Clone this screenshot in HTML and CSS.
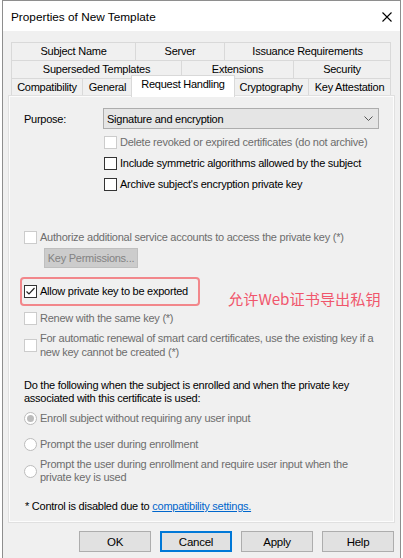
FILE: index.html
```html
<!DOCTYPE html>
<html>
<head>
<meta charset="utf-8">
<link rel="stylesheet" href="styles.css">
</head>
<body>
<div class="window">
  <div class="titlebar">
    <span class="title">Properties of New Template</span>
    <svg class="close" width="10" height="10" viewBox="0 0 10 10"><path d="M0.5 0.5 L9.5 9.5 M9.5 0.5 L0.5 9.5" stroke="#000" stroke-width="1.1" fill="none"/></svg>
  </div>
  <div class="body">
    <div class="tabs">
      <div class="tabrow r1">
        <div class="tab">Subject Name</div>
        <div class="tab">Server</div>
        <div class="tab">Issuance Requirements</div>
      </div>
      <div class="tabrow r2">
        <div class="tab">Superseded Templates</div>
        <div class="tab">Extensions</div>
        <div class="tab">Security</div>
      </div>
      <div class="tabrow r3">
        <div class="tab">Compatibility</div>
        <div class="tab">General</div>
        <div class="tab active">Request Handling</div>
        <div class="tab">Cryptography</div>
        <div class="tab">Key Attestation</div>
      </div>
    </div>
    <div class="panel">
      <div class="purpose-row">
        <span class="label">Purpose:</span>
        <div class="select">
          <span>Signature and encryption</span>
          <svg class="chev" width="9" height="5" viewBox="0 0 9 5"><path d="M0.5 0.5 L4.5 4.5 L8.5 0.5" stroke="#555" stroke-width="1" fill="none"/></svg>
        </div>
      </div>
      <div class="indent-group">
        <div class="cb disabled"><span class="box"></span><span class="txt">Delete revoked or expired certificates (do not archive)</span></div>
        <div class="cb"><span class="box"></span><span class="txt">Include symmetric algorithms allowed by the subject</span></div>
        <div class="cb"><span class="box"></span><span class="txt">Archive subject's encryption private key</span></div>
      </div>
      <div class="cb disabled authorize"><span class="box"></span><span class="txt">Authorize additional service accounts to access the private key (*)</span></div>
      <div class="keyperm">Key Permissions...</div>
      <div class="red-row">
        <div class="highlight">
          <div class="cb"><span class="box checked"><svg width="11" height="11" viewBox="0 0 11 11"><path d="M1.5 5.5 L4 8 L9.5 2" stroke="#222" stroke-width="1.2" fill="none"/></svg></span><span class="txt">Allow private key to be exported</span></div>
        </div>
        <span class="note">允许Web证书导出私钥</span>
      </div>
      <div class="cb disabled renew"><span class="box"></span><span class="txt">Renew with the same key (*)</span></div>
      <div class="cb disabled multi auto"><span class="box"></span><span class="txt">For automatic renewal of smart card certificates, use the existing key if a new key cannot be created (*)</span></div>
      <p class="para">Do the following when the subject is enrolled and when the private key associated with this certificate is used:</p>
      <div class="rb disabled r-first"><span class="radio on"></span><span class="txt">Enroll subject without requiring any user input</span></div>
      <div class="rb disabled r-second"><span class="radio"></span><span class="txt">Prompt the user during enrollment</span></div>
      <div class="rb disabled multi r-third"><span class="radio"></span><span class="txt">Prompt the user during enrollment and require user input when the private key is used</span></div>
      <p class="foot">* Control is disabled due to <a class="link" href="#">compatibility settings.</a></p>
    </div>
    <div class="buttons">
      <div class="btn">OK</div>
      <div class="btn default">Cancel</div>
      <div class="btn">Apply</div>
      <div class="btn">Help</div>
    </div>
  </div>
</div>
</body>
</html>
```

FILE: styles.css
```css
* { box-sizing: border-box; }
html, body { margin: 0; padding: 0; }
body {
  background: #fff;
  width: 403px;
  height: 558px;
  overflow: hidden;
  font-family: "Liberation Sans", Arial, sans-serif;
  font-size: 11px;
  letter-spacing: -0.25px;
  color: #000;
}
.window {
  margin-left: 2px;
  width: 399px;
  height: 558px;
  border: 1px solid #8e8e8e;
  border-bottom: 0;
  background: #f0f0f0;
}
.titlebar {
  height: 30px;
  background: #fff;
  display: flex;
  align-items: center;
  justify-content: space-between;
  padding: 1px 8px 0 8px;
}
.title {
  font-size: 11.8px;
  letter-spacing: 0;
}
.close { display: block; margin-top: 1px; }
.body {
  padding: 11px 6px 0 6px;
}
.tabs {
  margin: 0 3px 0 2px;
}
.tabrow {
  display: grid;
  height: 18px;
  border-right: 1px solid #d9d9d9;
}
.r1 { grid-template-columns: 124px 89px 166px; }
.r2 { grid-template-columns: 170px 112px 97px; }
.r3 { grid-template-columns: 71px 50px 101px 75px 82px; }
.tab {
  border-left: 1px solid #d9d9d9;
  border-top: 1px solid #d9d9d9;
  display: flex;
  align-items: center;
  justify-content: center;
  white-space: nowrap;
  background: #f0f0f0;
  padding-bottom: 1px;
}
.tab.active {
  position: relative;
  z-index: 2;
  background: #fff;
  margin: -3px -2px -1px -1px;
  border-right: 1px solid #d9d9d9;
  padding-bottom: 5px;
}
.panel {
  height: 426px;
  border: 1px solid #fcfcfc;
  box-shadow: 0 0 0 1px #e0e0e0;
  padding: 0 14px 0 14px;
  position: relative;
  z-index: 1;
}
.purpose-row {
  margin-top: 11px;
  height: 21px;
  display: flex;
  align-items: center;
}
.label { width: 79px; }
.select {
  width: 276px;
  height: 21px;
  background: #e5e5e5;
  border: 1px solid #adadad;
  display: flex;
  align-items: center;
  justify-content: space-between;
  padding: 0 5px 0 3px;
}
.chev { display: block; }
.indent-group {
  margin: 3px 0 0 80px;
}
.cb, .rb {
  display: flex;
  align-items: center;
  height: 21px;
  line-height: 13px;
}
.box {
  width: 13px;
  height: 13px;
  border: 1px solid #333;
  background: #fff;
  margin-right: 3px;
  flex: none;
  display: flex;
  align-items: center;
  justify-content: center;
}
.box svg { display: block; }
.disabled { color: #6d6d6d; }
.disabled .box { border-color: #cccccc; }
.authorize { margin-top: 32px; }
.keyperm {
  margin-left: 20px;
  width: 94px;
  height: 20px;
  background: #cccccc;
  border: 1px solid #bfbfbf;
  color: #838383;
  display: flex;
  align-items: center;
  justify-content: center;
}
.red-row {
  margin-top: 9px;
  height: 29px;
  display: flex;
  align-items: flex-start;
}
.highlight {
  margin-left: -4px;
  width: 180px;
  height: 29px;
  border: 2px solid #f2878b;
  border-radius: 4px;
  padding-left: 2px;
  display: flex;
  align-items: center;
  flex: none;
}
.note {
  margin: 13px 0 0 28px;
  white-space: nowrap;
  font-family: "Noto Sans CJK SC", "Liberation Sans", sans-serif;
  font-size: 15.2px;
  letter-spacing: 0;
  line-height: 16px;
  color: #f0566c;
}
.renew { margin-top: 2px; }
.multi {
  height: auto;
}
.auto {
  margin-top: 2px;
  line-height: 14px;
}
.para {
  margin: 20px 0 0 0;
  line-height: 13px;
}
.radio {
  width: 13px;
  height: 13px;
  border: 1px solid #bcbcbc;
  border-radius: 50%;
  background: #fff;
  margin-right: 3px;
  flex: none;
  display: flex;
  align-items: center;
  justify-content: center;
}
.radio.on::after {
  content: "";
  width: 7px;
  height: 7px;
  border-radius: 50%;
  background: #bcbcbc;
}
.r-first { margin-top: 3px; }
.r-second { margin-top: 5px; }
.r-third { margin-top: 3px; }
.foot {
  margin: 16px 0 0 1px;
  line-height: 13px;
}
.link { color: #0066cc; text-decoration: underline; }
.buttons {
  margin-top: 9px;
  display: flex;
  justify-content: flex-end;
  gap: 9px;
}
.btn {
  width: 72px;
  height: 21px;
  background: #e1e1e1;
  border: 1px solid #adadad;
  display: flex;
  align-items: center;
  justify-content: center;
  font-size: 11.5px;
}
.btn.default {
  border-color: #0078d7;
  box-shadow: inset 0 0 0 1px #0078d7;
}
```
